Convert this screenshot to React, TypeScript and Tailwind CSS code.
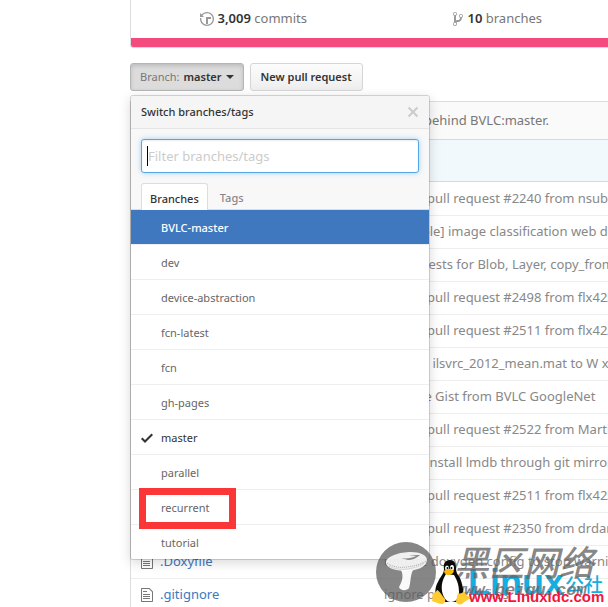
import React from "react";

const branches = [
  "BVLC-master",
  "dev",
  "device-abstraction",
  "fcn-latest",
  "fcn",
  "gh-pages",
  "master",
  "parallel",
  "recurrent",
  "tutorial",
];

const commits = [
  { file: "", message: "Merge pull request #2240 from nsubtil" },
  { file: "", message: "[example] image classification web demo" },
  { file: "", message: "Fix up tests for Blob, Layer, copy_from" },
  { file: "", message: "Merge pull request #2498 from flx42/nvcc" },
  { file: "", message: "Merge pull request #2511 from flx42/cmake" },
  { file: "", message: "Reduce ilsvrc_2012_mean.mat to W x H x C" },
  { file: "", message: "Add the Gist from BVLC GoogleNet" },
  { file: "", message: "Merge pull request #2522 from MartinThoma" },
  { file: "", message: "Travis: install lmdb through git mirror" },
  { file: "", message: "Merge pull request #2511 from flx42/cmake" },
  { file: "", message: "Merge pull request #2350 from drdan14" },
  { file: ".Doxyfile", message: "update doxygen config to stop warnings" },
  { file: ".gitignore", message: "ignore pycharm files" },
];

function HistoryIcon() {
  return (
    <svg width="14" height="16" viewBox="0 0 14 16" fill="#999" aria-hidden="true">
      <path d="M8 13H6V6h5v2H8v5zM7 1C4.81 1 2.87 2.02 1.59 3.59L0 2v4h4L2.500 4.500C3.550 3.170 5.170 2.300 7 2.300c3.140 0 5.700 2.560 5.700 5.700s-2.560 5.700-5.700 5.700A5.710 5.710 0 0 1 1.300 8c0-.34.03-.67.09-1H.08C.03 7.330 0 7.660 0 8c0 3.860 3.140 7 7 7s7-3.140 7-7-3.140-7-7-7z" />
    </svg>
  );
}

function BranchIcon() {
  return (
    <svg width="10" height="16" viewBox="0 0 10 16" fill="#999" aria-hidden="true">
      <path d="M10 5c0-1.11-.89-2-2-2a1.993 1.993 0 0 0-1 3.72v.3c-.02.52-.23.98-.63 1.38-.4.4-.86.61-1.38.63-.83.02-1.48.16-2 .45V4.72a1.993 1.993 0 0 0-1-3.72C.88 1 0 1.89 0 3a2 2 0 0 0 1 1.72v6.56c-.59.35-1 .99-1 1.72 0 1.11.89 2 2 2 1.11 0 2-.89 2-2 0-.53-.2-1-.53-1.36.09-.06.48-.41.59-.47.25-.11.56-.17.94-.17 1.05-.05 1.95-.45 2.75-1.25S8.95 7.77 9 6.73h-.02C9.59 6.37 10 5.73 10 5zM2 1.8c.66 0 1.2.55 1.2 1.2 0 .65-.55 1.2-1.2 1.2C1.35 4.2.8 3.65.8 3c0-.65.55-1.2 1.2-1.2zm0 12.41c-.66 0-1.2-.55-1.2-1.2 0-.65.55-1.2 1.2-1.2.65 0 1.2.55 1.2 1.2 0 .65-.55 1.2-1.2 1.2zm6-8c-.66 0-1.2-.55-1.2-1.2 0-.65.55-1.2 1.2-1.2.65 0 1.2.55 1.2 1.2 0 .65-.55 1.2-1.2 1.2z" />
    </svg>
  );
}

function FileIcon() {
  return (
    <svg width="12" height="16" viewBox="0 0 12 16" fill="#777" aria-hidden="true">
      <path d="M6 5H2V4h4v1zM2 8h7V7H2v1zm0 2h7V9H2v1zm0 2h7v-1H2v1zm10-7.5V14c0 .55-.45 1-1 1H1c-.55 0-1-.45-1-1V2c0-.55.45-1 1-1h7.500L12 4.500zM11 5L8 2H1v12h10V5z" />
    </svg>
  );
}

function CheckIcon() {
  return (
    <svg width="12" height="16" viewBox="0 0 12 16" fill="#333" aria-hidden="true">
      <path d="M12 5l-8 8-4-4 1.500-1.500L4 10l6.500-6.500z" />
    </svg>
  );
}

function CloseIcon() {
  return (
    <svg width="12" height="16" viewBox="0 0 12 16" fill="#ccc" aria-hidden="true">
      <path d="M7.480 8l3.750 3.750-1.480 1.480L6 9.480l-3.750 3.750-1.480-1.480L4.520 8 .77 4.250l1.480-1.480L6 6.520l3.750-3.750 1.480 1.480z" />
    </svg>
  );
}

function MushroomLogo() {
  return (
    <svg width="60" height="60" viewBox="0 0 60 60" aria-hidden="true">
      <circle cx="30" cy="30" r="30" fill="#5c5c5c" fillOpacity="0.74" />
      <path d="M10 20C11 14 24 10 35 10c9 0 16 3 16 8 0 7-11 11-21 11-12 0-21-4-20-9z" fill="#fff" fillOpacity="0.88" />
      <path d="M25 28c3 6 1 12-2 17 1 4 8 4 10 1 2-6 1-12 4-18z" fill="#fff" fillOpacity="0.95" />
      <path d="M11 21c5 4 13 5 20 4 8-1 15-3 19-6" fill="none" stroke="#aaa" strokeWidth="1" strokeDasharray="1 1" />
      <path d="M13 24c5 3 12 4 18 3 7-1 13-3 17-6" fill="none" stroke="#bbb" strokeWidth="1" strokeDasharray="1 1" />
      <path d="M25 16c6 1 11 0 15-2l-7 0c4-1 8-1 11-1-3 3-8 5-12 5z" fill="#888" />
    </svg>
  );
}

function Penguin() {
  return (
    <svg width="38" height="46" viewBox="0 0 38 46" aria-hidden="true">
      <path d="M18 1c-5 0-7 4-6 9 0 5-4 8-6 13C3 28 3 33 4 37l9 6h13l5-7c1-5-1-12-3-17-3-4-4-6-4-10 0-5-2-8-6-8z" fill="#0a0a0a" />
      <path d="M14 15c-3 5-5 10-4 17 1 6 4 11 9 11 5 0 8-4 8-10 0-7-2-12-5-17z" fill="#fff" />
      <ellipse cx="15" cy="9" rx="2" ry="2.500" fill="#fff" />
      <ellipse cx="20" cy="9" rx="2" ry="3" fill="#fff" />
      <circle cx="15.500" cy="9" r="1" />
      <circle cx="19.500" cy="9" r="1" />
      <path d="M12 12c3-3 7-3 10 0-1 3-4 4-6 4s-4-2-4-4z" fill="#f5b90c" />
      <path d="M5 31c3 1 5 6 8 9 1 3-1 5-4 5-3-1-7-2-9-3 1-2 0-5 1-8 2 0 3-1 4-3z" fill="#ffcb2e" />
      <path d="M26 34c2 1 5 0 6-2 1 3 3 5 6 6-1 3-5 4-8 7-3 1-6 0-6-3 1-3 1-5 2-8z" fill="#ffcb2e" />
    </svg>
  );
}

function Watermark() {
  return (
    <div className="pointer-events-none absolute top-[542px] left-[376px] z-20 h-[65px] w-[232px] leading-none" aria-hidden="true">
      <div className="absolute top-0 left-0">
        <MushroomLogo />
      </div>
      <div className="absolute top-[23px] left-[92px] font-['Liberation_Sans',sans-serif] text-[36px] font-bold text-[#15aee0]">Linux</div>
      <div className="absolute top-[32px] left-[189px] font-['Noto_Sans_CJK_SC',sans-serif] text-[19px] font-medium text-[#15aee0]">公社</div>
      <div className="absolute top-[1px] left-[78px] font-['Noto_Sans_CJK_SC',sans-serif] text-[35px] font-medium text-[#666]/80 italic">黑区网络</div>
      <div className="absolute top-[40px] left-[78px] font-['Liberation_Mono',monospace] text-[17px] font-bold text-[#666]/80 italic">www.heiqu.com</div>
      <div className="absolute top-[47px] left-[93px] font-['Liberation_Sans',sans-serif] text-[15px] font-bold text-[#f5143c]">www.Linuxidc.com</div>
      <div className="absolute top-[17px] left-[56px]">
        <Penguin />
      </div>
    </div>
  );
}

function BranchMenu() {
  return (
    <div className="absolute top-full left-0 z-10 mt-1 w-[300px] overflow-hidden rounded-[3px] border border-black/15 bg-white bg-clip-padding shadow-[0_3px_12px_rgba(0,0,0,0.15)]">
      <div className="flex h-[33px] items-center justify-between border-b border-[#e5e5e5] bg-[#f5f5f5] px-[10px]">
        <h2 className="font-medium text-[#333]">Switch branches/tags</h2>
        <button type="button" aria-label="Close">
          <CloseIcon />
        </button>
      </div>
      <div className="bg-[#f8f8f8]">
        <div className="relative p-[10px]">
          <input
            type="text"
            aria-label="Filter branches/tags"
            placeholder="Filter branches/tags"
            className="block h-[34px] w-full rounded-[3px] border border-[#51a7e8] bg-white px-[6px] text-[13px] text-[#333] shadow-[inset_0_1px_2px_rgba(0,0,0,0.075),0_0_5px_rgba(81,167,232,0.5)] outline-none placeholder:text-[#ccc]"
          />
          <span className="absolute top-[17px] left-4 h-5 w-px bg-black" />
        </div>
        <div role="tablist" className="flex h-[27px] border-b border-[#ddd] px-[10px]">
          <button type="button" role="tab" aria-selected="true" className="-mb-px rounded-t-[3px] border border-b-0 border-[#ddd] bg-white px-2 pt-1 font-medium text-[#333]">
            Branches
          </button>
          <button type="button" role="tab" aria-selected="false" className="px-3 pt-1 font-medium text-[#888]">
            Tags
          </button>
        </div>
      </div>
      <ul>
        {branches.map((name, i) => (
          <li key={name} className={i < branches.length - 1 ? "border-b border-[#eee]" : ""}>
            <a
              href="#"
              className={
                i === 0
                  ? "flex h-[34px] items-center bg-[#4078c0] px-[10px] pt-px font-medium text-white"
                  : name === "master"
                    ? "flex h-[34px] items-center px-[10px] pt-px text-[#333]"
                    : "flex h-[34px] items-center px-[10px] pt-px text-[#666]"
              }
            >
              <span className="w-5">{name === "master" && <CheckIcon />}</span>
              <span className="relative">
                {name}
                {name === "recurrent" && <span className="absolute -top-[12px] -left-[22px] h-[41px] w-[97px] border-[7px] border-[#fb3636]" />}
              </span>
            </a>
          </li>
        ))}
      </ul>
    </div>
  );
}

export default function App() {
  return (
    <div className="relative h-screen overflow-hidden bg-white font-['Noto_Sans',sans-serif] text-[13px] text-[#333]">
      <div className="ml-[130px] w-[980px]">
        <div className="overflow-hidden rounded-b-[3px] border border-t-0 border-[#ddd]">
          <ul className="grid h-[38px] grid-cols-4 pb-px text-[#777]">
            <li className="flex items-center justify-center">
              <a href="#" className="flex items-center gap-1">
                <HistoryIcon />
                <span>
                  <strong className="font-semibold text-[#333]">3,009</strong> commits
                </span>
              </a>
            </li>
            <li className="flex items-center justify-center">
              <a href="#" className="flex items-center gap-1">
                <BranchIcon />
                <span>
                  <strong className="font-semibold text-[#333]">10</strong> branches
                </span>
              </a>
            </li>
          </ul>
          <div className="h-[9px] bg-[#f34b7d]" />
        </div>

        <div className="mt-[15px] flex gap-[6px] text-[11px] leading-4">
          <div className="relative">
            <button type="button" aria-expanded="true" className="flex h-7 items-center rounded-[3px] border border-[#b5b5b5] bg-[#dcdcdc] px-[9px] font-semibold shadow-[inset_0_2px_4px_rgba(0,0,0,0.15)]">
              <span className="mr-1 font-normal text-[#777]">Branch:</span>
              master
              <span className="ml-1 border-x-4 border-t-4 border-x-transparent border-t-[#333]" />
            </button>
            <BranchMenu />
          </div>
          <button type="button" className="h-7 rounded-[3px] border border-[#d5d5d5] bg-linear-to-b from-[#fcfcfc] to-[#eee] px-[10px] font-semibold">
            New pull request
          </button>
        </div>

        <div className="mt-[10px] border border-[#ddd]">
          <p className="flex h-[37px] items-center bg-[#fafafa] pt-px pl-[10px] text-[#777]">
            <span className="ml-[283px]">behind BVLC:master.</span>
          </p>
          <div className="h-[43px] border-y border-[#c5dfe9] bg-[#f2f9fc]" />
          <table className="w-full table-fixed border-collapse">
            <tbody>
              {commits.map((c, i) => (
                <tr key={i} className={i > 0 ? "h-[33px] border-t border-[#eee]" : "h-[33px]"}>
                  <td className="w-[29px] pl-[10px]">{c.file && <FileIcon />}</td>
                  <td className="w-[224px]">
                    {c.file && (
                      <a href="#" className="text-[#4078c0]">
                        {c.file}
                      </a>
                    )}
                  </td>
                  <td className="whitespace-nowrap text-[#888]">{c.message}</td>
                </tr>
              ))}
            </tbody>
          </table>
        </div>
      </div>
      <Watermark />
    </div>
  );
}
